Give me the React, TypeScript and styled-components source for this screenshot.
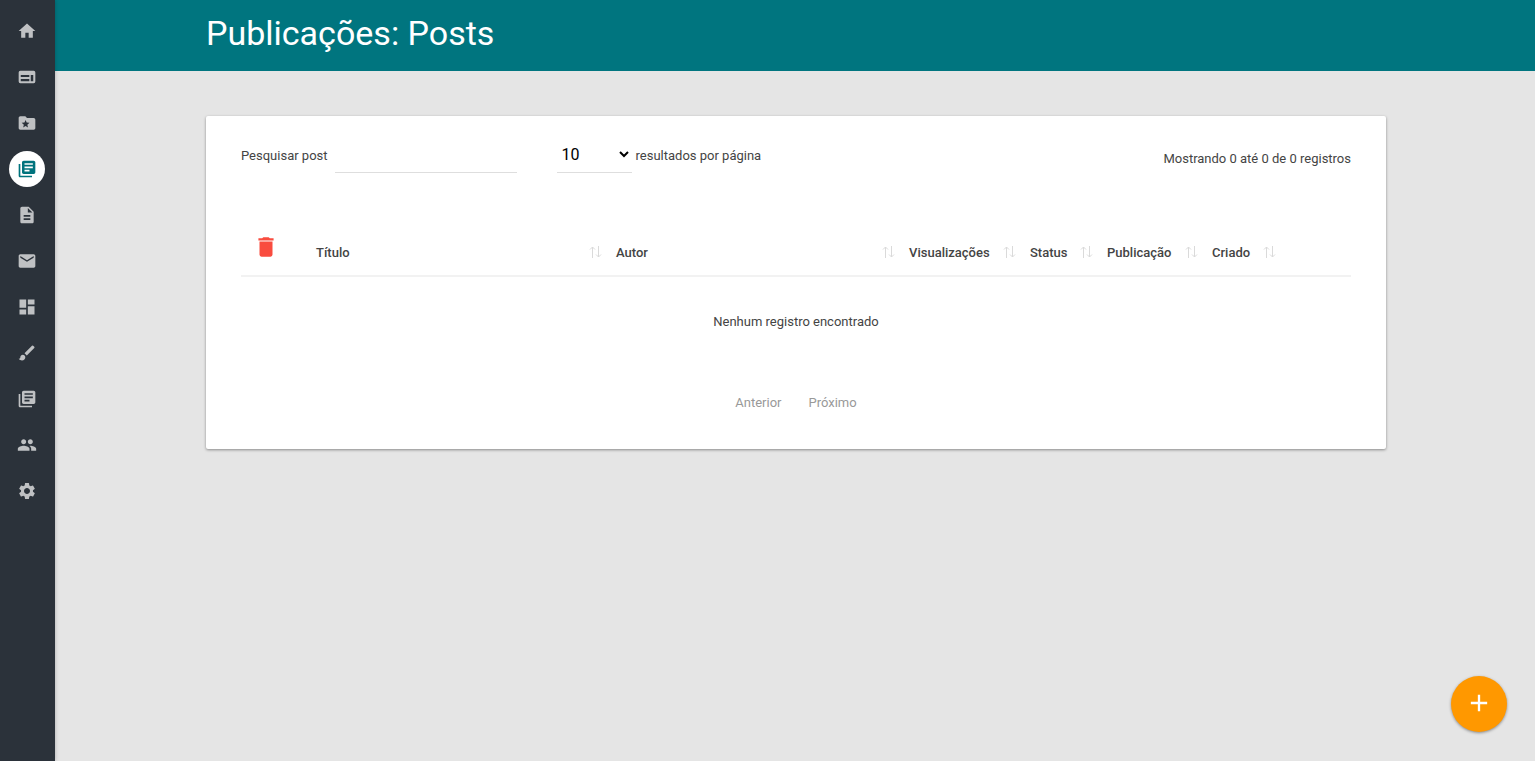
import React from "react";
import styled, { createGlobalStyle } from "styled-components";
import {
  MdAdd,
  MdBrush,
  MdDashboard,
  MdDelete,
  MdDescription,
  MdEmail,
  MdHome,
  MdLibraryBooks,
  MdPeople,
  MdSettings,
} from "react-icons/md";

const GlobalStyle = createGlobalStyle`
  *, *::before, *::after { box-sizing: border-box; }
  body {
    margin: 0;
    background: #e5e5e5;
    color: #444;
    font-family: Roboto, "Liberation Sans", sans-serif;
    font-size: 13px;
    line-height: 20px;
  }
  button, input, select { font-family: inherit; }
`;

const Shell = styled.div`
  display: grid;
  grid-template-columns: 55px minmax(0, 1fr);
  min-height: 100vh;
`;

const Sidebar = styled.nav`
  background: #2b323a;
  padding-top: 8px;
  box-shadow: 0 0 4px rgba(0, 0, 0, 0.25);
  z-index: 1;
`;

const NavList = styled.ul`
  list-style: none;
  margin: 0;
  padding: 0;
`;

const NavItem = styled.li`
  display: flex;
  justify-content: center;
  height: 46px;
  padding: 5px 1px 5px 0;
`;

const NavLink = styled.a<{ $active: boolean }>`
  display: flex;
  align-items: center;
  justify-content: center;
  width: 36px;
  height: 36px;
  border-radius: 50%;
  font-size: 20px;
  color: ${(p) => (p.$active ? "#00737d" : "#bfc1c3")};
  background: ${(p) => (p.$active ? "#fff" : "transparent")};
`;

const Header = styled.header`
  background: #00757f;
  height: 71px;
  padding: 0 24px 0 26px;
`;

const Main = styled.main`
  padding: 45px 24px 45px 26px;
`;

const Container = styled.div`
  max-width: 1180px;
  margin: 0 auto;
`;

const PageTitle = styled.h1`
  margin: 0;
  padding-top: 12px;
  font-size: 34px;
  font-weight: 400;
  line-height: 42px;
  color: #fff;
`;

const Card = styled(Container)`
  background: #fff;
  border-radius: 2px;
  padding: 20px 35px 36px;
  box-shadow: 0 1px 3px rgba(0, 0, 0, 0.4);
`;

const Toolbar = styled.div`
  display: flex;
  align-items: flex-start;
  height: 84px;
`;

const Field = styled.label`
  display: flex;
  align-items: center;
`;

const FieldText = styled.span`
  padding-top: 2px;
`;

const SearchField = styled(Field)`
  gap: 7px;
  margin-right: 40px;
`;

const SizeField = styled(Field)`
  gap: 4px;
`;

const SearchInput = styled.input`
  width: 182px;
  height: 37px;
  margin: 0;
  padding: 0 4px;
  border: 0;
  border-bottom: 1px solid #dedede;
  background: transparent;
  font-size: 16px;
  outline: none;
`;

const SizeSelect = styled.select`
  width: 75px;
  height: 37px;
  padding: 0 1px;
  border: 0;
  border-bottom: 1px solid #dedede;
  background: transparent;
  color: #000;
  font-size: 16px;
  outline: none;
`;

const Summary = styled.p`
  margin: 13px 0 0 auto;
`;

const Table = styled.table`
  width: 100%;
  table-layout: fixed;
  border-collapse: collapse;
`;

const HeadCell = styled.th<{ $width?: number }>`
  width: ${(p) => (p.$width ? p.$width + "px" : "auto")};
  height: 56px;
  padding: 5px 9px 0 5px;
  border-bottom: 2px solid #f2f2f2;
  vertical-align: middle;
  text-align: left;
  font-weight: 500;
`;

const SortButton = styled.button`
  display: flex;
  align-items: center;
  justify-content: space-between;
  width: 100%;
  height: 40px;
  padding: 4px 0 0;
  border: 0;
  background: none;
  color: #444;
  font-size: 13px;
  font-weight: 500;
  cursor: pointer;
`;

const DeleteButton = styled.button`
  display: flex;
  width: 40px;
  height: 40px;
  align-items: center;
  justify-content: center;
  padding: 0 0 6px;
  border: 0;
  background: none;
  color: #f94c3f;
  font-size: 26px;
  cursor: pointer;
`;

const EmptyCell = styled.td`
  height: 90px;
  padding: 0;
  text-align: center;
`;

const Pagination = styled.nav`
  display: flex;
  justify-content: center;
  gap: 27px;
  margin-top: 27px;
`;

const PageButton = styled.button`
  padding: 0;
  border: 0;
  background: none;
  color: #999;
  font-size: 13px;
  line-height: 20px;
`;

const AddButton = styled.button`
  position: fixed;
  right: 28px;
  bottom: 29px;
  display: flex;
  align-items: center;
  justify-content: center;
  width: 56px;
  height: 56px;
  padding: 0 0 2px;
  border: 0;
  border-radius: 50%;
  background: #ff9800;
  color: #fff;
  font-size: 28px;
  box-shadow: 0 1px 3px rgba(0, 0, 0, 0.4);
  cursor: pointer;
`;

const SortArrows = () => (
  <svg width="13" height="12" viewBox="0 0 13 12" fill="none" stroke="#dadada" aria-hidden="true">
    <path d="M3.5 12V1M1 3.5L3.5 1L6 3.5" />
    <path d="M9.5 0V11M7 8.5L9.5 11L12 8.5" />
  </svg>
);

const WebLayoutIcon = () => (
  <svg width="1em" height="1em" viewBox="0 0 24 24" fill="currentColor" fillRule="evenodd" aria-hidden="true">
    <path d="M4 4.5H20a2 2 0 0 1 2 2V17.5a2 2 0 0 1-2 2H4a2 2 0 0 1-2-2V6.500a2 2 0 0 1 2-2zM4.500 9.500V12H14.800V9.500zM4.500 14.300V17H14.800V14.300zM16.500 9.500V17H19.500V9.500z" />
  </svg>
);

const StarFolderIcon = () => (
  <svg width="1em" height="1em" viewBox="0 0 24 24" fill="currentColor" fillRule="evenodd" aria-hidden="true">
    <path d="M20 6h-8l-2-2H4c-1.100 0-2 .9-2 2v12c0 1.100.9 2 2 2h16c1.100 0 2-.9 2-2V8c0-1.100-.9-2-2-2zM10.300 8.300L11.600 11.500L15 11.800L12.400 14L13.200 17.400L10.300 15.600L7.400 17.400L8.200 14L5.600 11.800L9 11.500z" />
  </svg>
);

const navItems: { label: string; icon: React.ComponentType; active?: boolean }[] = [
  { label: "Início", icon: MdHome },
  { label: "Site", icon: WebLayoutIcon },
  { label: "Destaques", icon: StarFolderIcon },
  { label: "Publicações", icon: MdLibraryBooks, active: true },
  { label: "Páginas", icon: MdDescription },
  { label: "Mensagens", icon: MdEmail },
  { label: "Painel", icon: MdDashboard },
  { label: "Aparência", icon: MdBrush },
  { label: "Biblioteca", icon: MdLibraryBooks },
  { label: "Usuários", icon: MdPeople },
  { label: "Configurações", icon: MdSettings },
];

const columns: { title: string; width?: number }[] = [
  { title: "Título", width: 300 },
  { title: "Autor" },
  { title: "Visualizações", width: 121 },
  { title: "Status", width: 77 },
  { title: "Publicação", width: 105 },
  { title: "Criado", width: 78 },
];

export default function App() {
  return (
    <>
      <GlobalStyle />
      <Shell>
        <Sidebar aria-label="Menu principal">
          <NavList>
            {navItems.map(({ label, icon: Icon, active }) => (
              <NavItem key={label}>
                <NavLink
                  href="#"
                  $active={!!active}
                  aria-label={label}
                  aria-current={active ? "page" : undefined}
                >
                  <Icon />
                </NavLink>
              </NavItem>
            ))}
          </NavList>
        </Sidebar>
        <div>
          <Header>
            <Container>
              <PageTitle>Publicações: Posts</PageTitle>
            </Container>
          </Header>
          <Main>
            <Card as="section">
              <Toolbar>
                <SearchField>
                  <FieldText>Pesquisar post</FieldText>
                  <SearchInput type="search" />
                </SearchField>
                <SizeField>
                  <SizeSelect defaultValue="10">
                    <option>10</option>
                    <option>25</option>
                    <option>50</option>
                    <option>100</option>
                  </SizeSelect>
                  <FieldText>resultados por página</FieldText>
                </SizeField>
                <Summary>Mostrando 0 até 0 de 0 registros</Summary>
              </Toolbar>
              <Table>
                <thead>
                  <tr>
                    <HeadCell $width={70}>
                      <DeleteButton type="button" aria-label="Excluir selecionados">
                        <MdDelete />
                      </DeleteButton>
                    </HeadCell>
                    {columns.map(({ title, width }) => (
                      <HeadCell key={title} $width={width}>
                        <SortButton type="button">
                          {title}
                          <SortArrows />
                        </SortButton>
                      </HeadCell>
                    ))}
                    <HeadCell $width={66} />
                  </tr>
                </thead>
                <tbody>
                  <tr>
                    <EmptyCell colSpan={8}>Nenhum registro encontrado</EmptyCell>
                  </tr>
                </tbody>
              </Table>
              <Pagination aria-label="Paginação">
                <PageButton type="button">Anterior</PageButton>
                <PageButton type="button">Próximo</PageButton>
              </Pagination>
            </Card>
          </Main>
        </div>
        <AddButton type="button" aria-label="Adicionar post">
          <MdAdd />
        </AddButton>
      </Shell>
    </>
  );
}
